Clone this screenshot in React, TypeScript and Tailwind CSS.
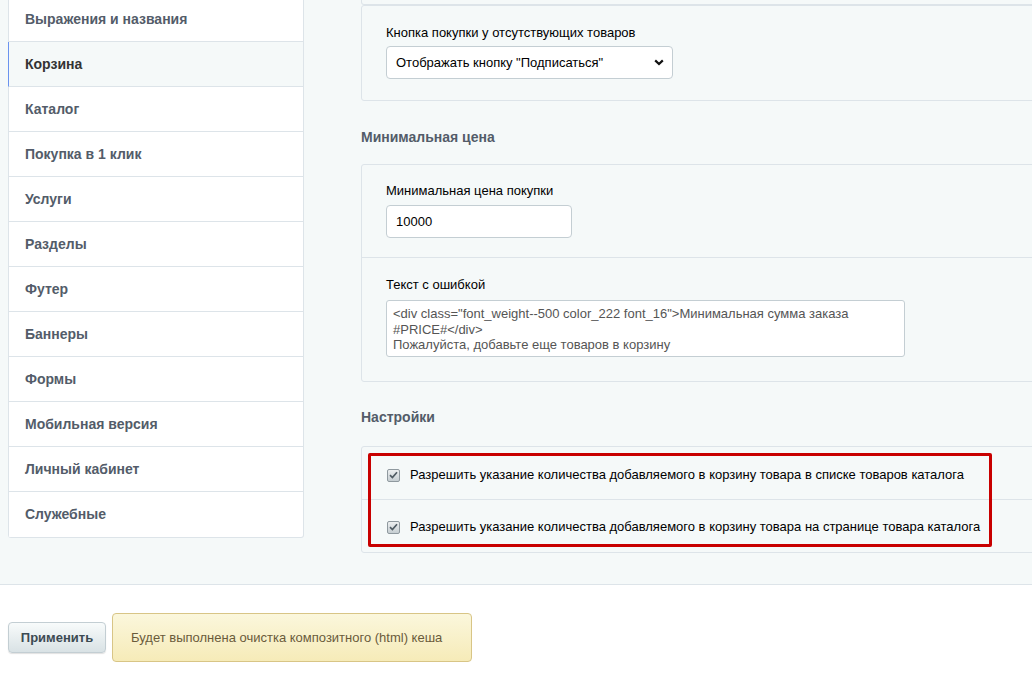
import React from "react"

const menu = [
  "Выражения и названия",
  "Корзина",
  "Каталог",
  "Покупка в 1 клик",
  "Услуги",
  "Разделы",
  "Футер",
  "Баннеры",
  "Формы",
  "Мобильная версия",
  "Личный кабинет",
  "Служебные",
]

const font = { fontFamily: '"Liberation Sans", Arial, sans-serif' }

const Checkbox = () => (
  <span className="inline-flex h-[13px] w-[13px] shrink-0 items-center justify-center rounded-[2px] border border-[#8f999f] bg-gradient-to-b from-[#eceff0] to-[#c6ced2]">
    <svg width="9" height="8" viewBox="0 0 9 8" fill="none">
      <path d="M1 4.2 L3.4 6.5 L8 1.2" stroke="#4f5b63" strokeWidth="1.7" />
    </svg>
  </span>
)

const Sidebar = () => (
  <div className="-mt-[4px] w-[296px] shrink-0 self-start overflow-hidden rounded-b-[3px] border-y border-r border-[#dde4e9] bg-white">
    {menu.map((item, i) => (
      <div
        key={item}
        className={`flex h-[45px] items-center pl-[16px] text-[14px] font-bold ${
          i < menu.length - 1 ? "border-b border-[#dde4e9]" : ""
        } ${
          i === 1
            ? "border-l border-l-[#6b93ef] bg-[#f5f9f9] text-[#333]"
            : "border-l border-l-[#dde4e9] text-[#535c69]"
        }`}
      >
        {item}
      </div>
    ))}
  </div>
)

const Content = () => (
  <div className="ml-[57px] w-[760px] shrink-0 text-[13px]">
    {/* tail of the block above */}
    <div className="h-[5px] rounded-b-[3px] border-x border-b border-[#dde4e9]" />

    <div className="rounded-[3px] border border-[#dde4e9] px-[24px] pb-[21px] pt-[19px]">
      <div className="mb-[5px] leading-[16px] text-[#000]">Кнопка покупки у отсутствующих товаров</div>
      <div className="flex h-[33px] w-[287px] items-center justify-between rounded-[4px] border border-[#c4ced3] bg-white pl-[9px] pr-[8px]">
        <span className="text-[13px] text-[#000]">Отображать кнопку "Подписаться"</span>
        <svg width="10" height="7" viewBox="0 0 10 7" fill="none">
          <path d="M1.2 1.4 L5 5 L8.8 1.4" stroke="#111" strokeWidth="2.2" />
        </svg>
      </div>
    </div>

    <div className="mb-[18px] mt-[28px] text-[14px] font-bold leading-[17px] text-[#535c69]">
      Минимальная цена
    </div>

    <div className="rounded-[3px] border border-[#dde4e9]">
      <div className="px-[24px] pb-[19px] pt-[18px]">
        <div className="mb-[6px] leading-[16px] text-[#000]">Минимальная цена покупки</div>
        <div className="flex h-[33px] w-[186px] items-center rounded-[4px] border border-[#c4ced3] bg-white pl-[9px] text-[#000]">
          10000
        </div>
      </div>
      <div className="border-t border-[#dde4e9] px-[24px] pb-[24px] pt-[19px]">
        <div className="mb-[7px] leading-[16px] text-[#000]">Текст с ошибкой</div>
        <div className="h-[57px] w-[519px] rounded-[3px] border border-[#c4ced3] bg-white px-[6px] pt-[5px] leading-[15.5px] text-[#555]">
          &lt;div class="font_weight--500 color_222 font_16"&gt;Минимальная сумма заказа
          <br />
          #PRICE#&lt;/div&gt;
          <br />
          Пожалуйста, добавьте еще товаров в корзину
        </div>
      </div>
    </div>

    <div className="mb-[20px] mt-[27px] text-[14px] font-bold leading-[17px] text-[#535c69]">
      Настройки
    </div>

    <div className="relative rounded-[3px] border border-[#dde4e9]">
      <div className="flex h-[52px] items-center gap-[10px] pl-[25px] pt-[4px] text-[#000]">
        <Checkbox />
        <span>Разрешить указание количества добавляемого в корзину товара в списке товаров каталога</span>
      </div>
      <div className="flex h-[53px] items-center gap-[10px] border-t border-[#dde4e9] pl-[25px] pt-[2px] text-[#000]">
        <Checkbox />
        <span>Разрешить указание количества добавляемого в корзину товара на странице товара каталога</span>
      </div>
      {/* highlight frame */}
      <div className="pointer-events-none absolute left-[6px] top-[6px] h-[94px] w-[624px] rounded-[2px] border-[3px] border-[#c80000]" />
    </div>
  </div>
)

export default function App() {
  return (
    <div className="min-h-[684px] w-full overflow-hidden bg-white" style={font}>
      <div className="flex h-[585px] border-b border-[#dde4e9] bg-[#f5f9f9] pl-[8px]">
        <Sidebar />
        <Content />
      </div>
      <div className="flex items-center gap-[6px] pl-[8px] pt-[28px]">
        <button className="h-[31px] w-[98px] rounded-[4px] border border-[#c3ced3] bg-gradient-to-b from-[#f8fbfb] to-[#d9e2e5] text-[13px] font-bold text-[#3c4a52] shadow-[0_1px_1px_rgba(0,0,0,0.12)]">
          Применить
        </button>
        <div className="flex h-[49px] w-[360px] items-center rounded-[4px] border border-[#d8c586] bg-gradient-to-b from-[#fbf7dc] to-[#f6ebb8] pl-[18px] text-[13px] text-[#6a5b3b]">
          Будет выполнена очистка композитного (html) кеша
        </div>
      </div>
    </div>
  )
}
